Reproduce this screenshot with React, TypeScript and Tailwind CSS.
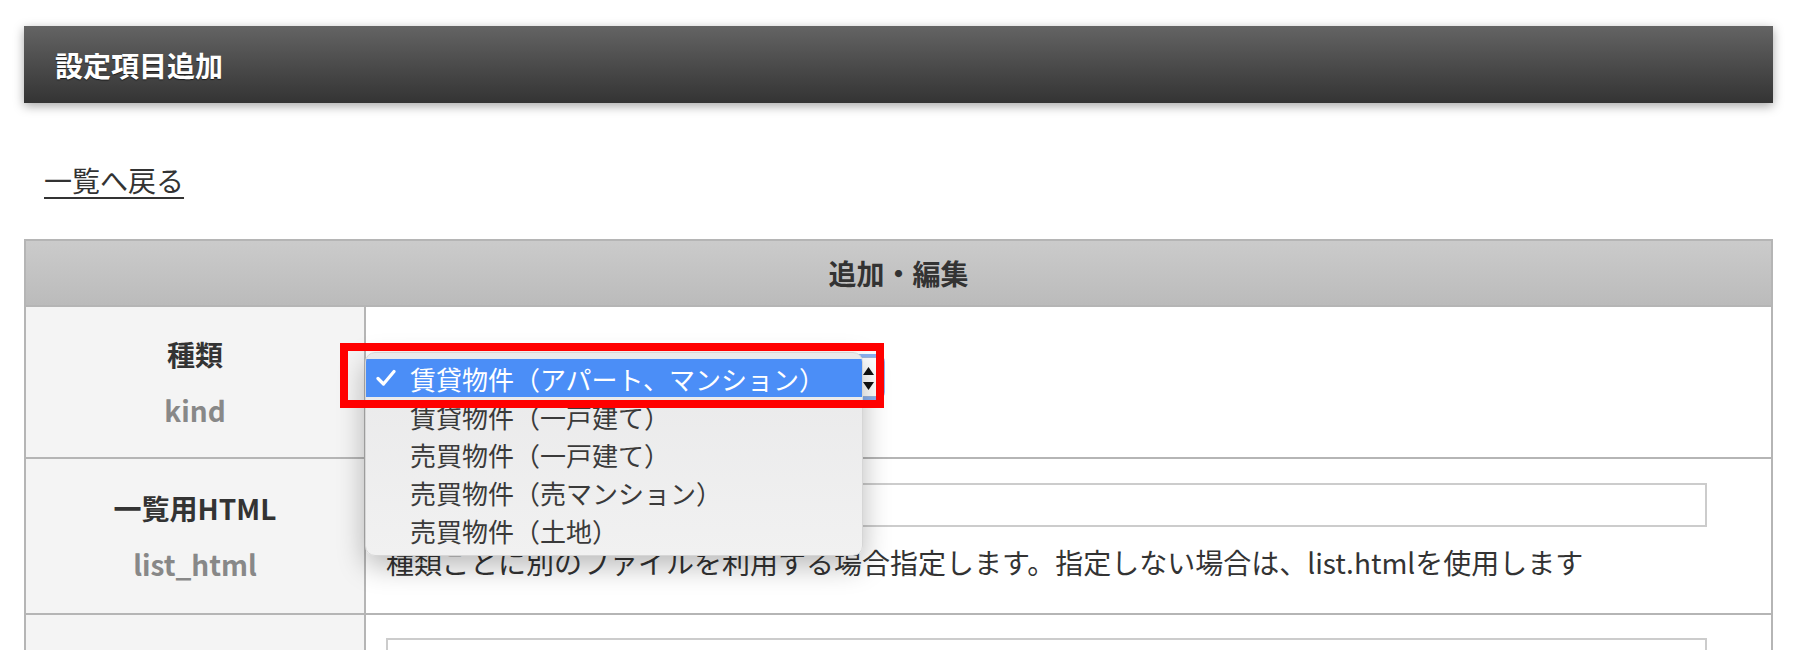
import React from 'react';

const options = [
  '賃貸物件（アパート、マンション）',
  '賃貸物件（一戸建て）',
  '売買物件（一戸建て）',
  '売買物件（売マンション）',
  '売買物件（土地）',
];

const font = "font-['Noto_Sans_CJK_JP','Noto_Sans',sans-serif]";

const LabelCell = ({ ja, en }: { ja: string; en: string }) => (
  <div className="w-[340px] shrink-0 bg-[#f4f4f4] border-r-2 border-[#b5b5b5] flex flex-col items-center justify-center">
    <span className="text-[28px] leading-[56px] font-bold text-[#333]">{ja}</span>
    <span className="text-[28px] leading-[56px] font-bold text-[#888]">{en}</span>
  </div>
);

const App = () => {
  return (
    <div className={`w-[1796px] h-[650px] overflow-hidden bg-white pt-[26px] pl-[24px] pr-[23px] ${font}`}>
      {/* タイトルバー */}
      <div className="h-[77px] flex items-center pl-[31px] bg-gradient-to-b from-[#646464] to-[#343434] shadow-[0_3px_10px_rgba(0,0,0,0.35)]">
        <h1 className="text-[28px] font-bold text-white [text-shadow:0_1px_1px_rgba(0,0,0,0.6)]">設定項目追加</h1>
      </div>

      <div className="mt-[49px] pl-[20px]">
        <a href="#" className="text-[28px] leading-[56px] text-[#333] underline decoration-2 underline-offset-[5px]">
          一覧へ戻る
        </a>
      </div>

      {/* 編集テーブル */}
      <div className="mt-[31px] border-2 border-[#b5b5b5]">
        <div className="h-[66px] flex items-center justify-center bg-gradient-to-b from-[#cbcbcb] to-[#bbbbbb] border-b-2 border-[#b5b5b5]">
          <span className="text-[28px] font-bold text-[#333]">追加・編集</span>
        </div>

        {/* 種類 */}
        <div className="h-[152px] flex border-b-2 border-[#b5b5b5]">
          <LabelCell ja="種類" en="kind" />
          <div className="relative flex-1 pt-[50px] pl-[20px]">
            {/* select本体 */}
            <div className="relative w-[496px] h-[40px] rounded-[5px] bg-white border border-[#9fb7dd] shadow-[0_0_0_3px_rgba(100,152,238,0.75)]">
              <svg className="absolute right-[7px] top-[9px]" width="11" height="23" viewBox="0 0 11 23">
                <polygon points="5.5,0 11,8 0,8" fill="#111" />
                <polygon points="0,15 11,15 5.5,23" fill="#111" />
              </svg>
            </div>

            {/* ドロップダウン */}
            <div className="absolute left-[-1px] top-[45px] w-[498px] h-[204px] pt-[6px] rounded-[10px] bg-gradient-to-b from-[#e9e9ea] to-[#f1f1f1] border border-[#d6d6d6] shadow-[0_10px_28px_rgba(0,0,0,0.28)] overflow-hidden z-10">
              {options.map((o, i) => (
                <div
                  key={o}
                  className={`relative h-[38px] flex items-center pl-[44px] text-[26px] ${i === 0 ? 'bg-[#4b8ef7] text-white' : 'text-[#3a3a3a]'}`}
                >
                  {i === 0 && (
                    <svg className="absolute left-[10px] top-[10px]" width="20" height="18" viewBox="0 0 20 18">
                      <path d="M2 9.5 L7.5 15 L18 2.5" fill="none" stroke="white" strokeWidth="3.2" strokeLinecap="round" strokeLinejoin="round" />
                    </svg>
                  )}
                  {o}
                </div>
              ))}
            </div>

            {/* 赤枠 */}
            <div className="absolute left-[-26px] top-[36px] w-[544px] h-[65px] border-[8px] border-[#ff0000] z-20" />
          </div>
        </div>

        {/* 一覧用HTML */}
        <div className="h-[156px] flex border-b-2 border-[#b5b5b5]">
          <LabelCell ja="一覧用HTML" en="list_html" />
          <div className="flex-1 pt-[24px] pl-[20px]">
            <div className="w-[1321px] h-[44px] border-2 border-[#cccccc] bg-white" />
            <p className="mt-[7px] text-[28px] leading-[56px] text-[#333]">
              種類ごとに別のファイルを利用する場合指定します。指定しない場合は、list.htmlを使用します
            </p>
          </div>
        </div>

        {/* 詳細用HTML */}
        <div className="h-[156px] flex">
          <LabelCell ja="詳細用HTML" en="detail_html" />
          <div className="flex-1 pt-[23px] pl-[20px]">
            <div className="w-[1321px] h-[44px] border-2 border-[#cccccc] bg-white" />
            <p className="mt-[7px] text-[28px] leading-[56px] text-[#333]">
              種類ごとに別のファイルを利用する場合指定します。指定しない場合は、detail.htmlを使用します
            </p>
          </div>
        </div>
      </div>
    </div>
  );
};

export default App;
